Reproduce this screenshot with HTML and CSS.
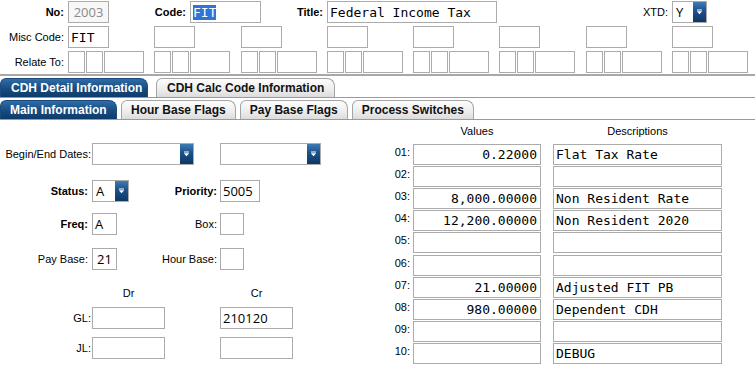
FILE: index.html
```html
<!DOCTYPE html>
<html lang="en">
<head>
<meta charset="utf-8">
<title>CDH Detail</title>
<link rel="stylesheet" href="styles.css">
</head>
<body>
<div class="hdr">
  <div class="r1">
    <span class="lb b w-no">No:</span>
    <div class="fld dis w41">2003</div>
    <span class="lb b w-code">Code:</span>
    <div class="fld mono w71"><span class="hl">FIT</span></div>
    <span class="lb b w-title">Title:</span>
    <div class="fld mono w170">Federal Income Tax</div>
    <span class="lb w-xtd">XTD:</span>
    <div class="dd w35"><span class="ddv">Y</span><span class="ddb"><svg width="7" height="6" viewBox="0 0 7 6"><path d="M1 0.5h5v1H1z M0.8 2.3h5.4L3.5 5.3z" fill="#fff"/></svg></span></div>
  </div>
  <div class="rg">
    <span class="lb">Misc Code:</span>
    <div class="fld mono w41">FIT</div>
    <div class="fld w41"></div>
    <div class="fld w41"></div>
    <div class="fld w41"></div>
    <div class="fld w41"></div>
    <div class="fld w41"></div>
    <div class="fld w41"></div>
    <div class="fld w41"></div>
  </div>
  <div class="rg">
    <span class="lb">Relate To:</span>
    <div class="grp"><div class="fld w17"></div><div class="fld w17"></div><div class="fld w40"></div></div>
    <div class="grp"><div class="fld w17"></div><div class="fld w17"></div><div class="fld w40"></div></div>
    <div class="grp"><div class="fld w17"></div><div class="fld w17"></div><div class="fld w40"></div></div>
    <div class="grp"><div class="fld w17"></div><div class="fld w17"></div><div class="fld w40"></div></div>
    <div class="grp"><div class="fld w17"></div><div class="fld w17"></div><div class="fld w40"></div></div>
    <div class="grp"><div class="fld w17"></div><div class="fld w17"></div><div class="fld w40"></div></div>
    <div class="grp"><div class="fld w17"></div><div class="fld w17"></div><div class="fld w40"></div></div>
    <div class="grp"><div class="fld w17"></div><div class="fld w17"></div><div class="fld w40"></div></div>
  </div>
</div>
<div class="hline"></div>
<div class="tabs t1">
  <div class="tab on">CDH Detail Information</div>
  <div class="tab gap8">CDH Calc Code Information</div>
</div>
<div class="tabs t2">
  <div class="tab on">Main Information</div>
  <div class="tab">Hour Base Flags</div>
  <div class="tab">Pay Base Flags</div>
  <div class="tab">Process Switches</div>
</div>
<div class="main">
  <div class="left">
    <div class="frow m0">
      <span class="lb tight">Begin/End Dates:</span>
      <div class="c2"><div class="dd w102"><span class="ddv"></span><span class="ddb"><svg width="7" height="6" viewBox="0 0 7 6"><path d="M1 0.5h5v1H1z M0.8 2.3h5.4L3.5 5.3z" fill="#fff"/></svg></span></div></div>
      <div class="dd w101"><span class="ddv"></span><span class="ddb"><svg width="7" height="6" viewBox="0 0 7 6"><path d="M1 0.5h5v1H1z M0.8 2.3h5.4L3.5 5.3z" fill="#fff"/></svg></span></div>
    </div>
    <div class="frow m15">
      <span class="lb b">Status:</span>
      <div class="c2"><div class="dd w37"><span class="ddv">A</span><span class="ddb"><svg width="7" height="6" viewBox="0 0 7 6"><path d="M1 0.5h5v1H1z M0.8 2.3h5.4L3.5 5.3z" fill="#fff"/></svg></span></div><span class="lb2 b">Priority:</span></div>
      <div class="fld w40">5005</div>
    </div>
    <div class="frow m11">
      <span class="lb b">Freq:</span>
      <div class="c2"><div class="fld w25">A</div><span class="lb2">Box:</span></div>
      <div class="fld w24"></div>
    </div>
    <div class="frow m13">
      <span class="lb">Pay Base:</span>
      <div class="c2"><div class="fld w25 ctr">21</div><span class="lb2">Hour Base:</span></div>
      <div class="fld w24"></div>
    </div>
    <div class="frow hrow m16">
      <span></span>
      <div class="c2"><span class="colh">Dr</span></div>
      <span class="colh">Cr</span>
    </div>
    <div class="frow m7">
      <span class="lb tight">GL:</span>
      <div class="c2"><div class="fld w73"></div></div>
      <div class="fld w73">210120</div>
    </div>
    <div class="frow m8">
      <span class="lb tight">JL:</span>
      <div class="c2"><div class="fld w73"></div></div>
      <div class="fld w73"></div>
    </div>
  </div>
  <div class="right">
    <div class="vgrid">
      <span></span><span class="vh">Values</span><span></span><span class="vh">Descriptions</span>
      <span class="rl">01:</span><div class="fld mono num">0.22000</div><span></span><div class="fld mono">Flat Tax Rate</div>
      <span class="rl">02:</span><div class="fld mono num"></div><span></span><div class="fld mono"></div>
      <span class="rl">03:</span><div class="fld mono num">8,000.00000</div><span></span><div class="fld mono">Non Resident Rate</div>
      <span class="rl">04:</span><div class="fld mono num">12,200.00000</div><span></span><div class="fld mono">Non Resident 2020</div>
      <span class="rl">05:</span><div class="fld mono num"></div><span></span><div class="fld mono"></div>
      <span class="rl">06:</span><div class="fld mono num"></div><span></span><div class="fld mono"></div>
      <span class="rl">07:</span><div class="fld mono num">21.00000</div><span></span><div class="fld mono">Adjusted FIT PB</div>
      <span class="rl">08:</span><div class="fld mono num">980.00000</div><span></span><div class="fld mono">Dependent CDH</div>
      <span class="rl">09:</span><div class="fld mono num"></div><span></span><div class="fld mono"></div>
      <span class="rl">10:</span><div class="fld mono num"></div><span></span><div class="fld mono">DEBUG</div>
    </div>
  </div>
</div>
</body>
</html>
```

FILE: styles.css
```css
html, body {
  margin: 0;
  padding: 0;
  background: #fff;
}
body {
  font-family: "Liberation Sans", Arial, sans-serif;
  font-size: 11px;
  color: #000;
  width: 755px;
  height: 369px;
  overflow: hidden;
}
.b { font-weight: bold; }
.lb {
  box-sizing: border-box;
  text-align: right;
  padding-right: 4px;
  white-space: nowrap;
}
.lb.tight { padding-right: 1px; }

.fld {
  box-sizing: border-box;
  height: 22px;
  border: 1px solid #ababab;
  background: #fff;
  display: flex;
  align-items: center;
  padding: 0 2px;
  overflow: hidden;
  white-space: nowrap;
  font-family: "Open Sans", "DejaVu Sans", sans-serif;
  font-size: 13px;
}
.fld.mono {
  font-family: "DejaVu Sans Mono", "Liberation Mono", monospace;
  font-size: 13px;
}
.fld.dis {
  color: #8a8a8a;
  background: #f7f7f7;
  justify-content: center;
}
.fld.num { justify-content: flex-end; padding-right: 3px; }
.fld.ctr { justify-content: center; }
.hl {
  background: #2f74d6;
  color: #fff;
  line-height: 15px;
}

.w17 { width: 17px; }
.w24 { width: 24px; }
.w25 { width: 25px; }
.w35 { width: 35px; }
.w37 { width: 37px; }
.w40 { width: 40px; }
.w41 { width: 41px; }
.w71 { width: 71px; }
.w73 { width: 73px; }
.w101 { width: 101px; }
.w102 { width: 102px; }
.w170 { width: 170px; }

.dd {
  box-sizing: border-box;
  height: 22px;
  border: 1px solid #ababab;
  background: #fff;
  display: flex;
  font-family: "Open Sans", "DejaVu Sans", sans-serif;
  font-size: 13px;
}
.ddv {
  flex: 1;
  display: flex;
  align-items: center;
  padding-left: 3px;
}
.ddb {
  width: 13px;
  background: linear-gradient(#3f7bb3, #1b5189 45%, #0d3766);
  display: flex;
  align-items: center;
  justify-content: center;
}
.ddb svg { display: block; }

/* header */
.hdr { padding-top: 1px; }
.r1 {
  display: flex;
  align-items: center;
  height: 22px;
}
.w-no { width: 68px; }
.w-code { width: 81px; }
.w-title { width: 66px; }
.w-xtd { width: 175px; }
.rg {
  display: grid;
  grid-template-columns: 68px repeat(8, 86.3px);
  align-items: center;
  height: 22px;
  margin-top: 3px;
}
.grp {
  display: flex;
  gap: 1px;
}
.hline {
  margin-top: 1px;
  height: 2px;
  background: #a8a8a8;
}

/* tabs */
.tabs {
  display: flex;
  align-items: flex-end;
  border-bottom: 1px solid #9a9a9a;
  margin-top: 2px;
  gap: 4px;
  height: 19px;
}
.tab {
  box-sizing: border-box;
  height: 19px;
  padding: 0 9px;
  display: flex;
  align-items: center;
  font-weight: bold;
  font-size: 12px;
  color: #111;
  white-space: nowrap;
  border: 1px solid #a5a5a5;
  border-bottom: none;
  border-radius: 6px 8px 0 0;
  background: linear-gradient(#fdfdfd, #ececec 60%, #dcdcdc);
}
.tab.on {
  color: #fff;
  border-color: #1a4c7f;
  background: linear-gradient(#2f6ca6, #174b80 55%, #0e3b6a);
}
.t1 .tab.on { width: 148px; padding-left: 10px; }
.t1 .gap8 { margin-left: 4px; padding: 0 10px; }
.t2 .tab.on { width: 117px; }

/* main */
.main {
  display: flex;
}
.left {
  width: 380px;
  padding-top: 23px;
}
.frow {
  display: grid;
  grid-template-columns: 92px 128px 110px;
  align-items: center;
  height: 22px;
}
.c2 {
  display: flex;
  align-items: center;
}
.lb2 {
  margin-left: auto;
  padding-right: 3px;
  white-space: nowrap;
}
.hrow { height: 14px; }
.colh {
  display: block;
  width: 73px;
  text-align: center;
}
.m0 { margin-top: 0; }
.m7 { margin-top: 7px; }
.m8 { margin-top: 8px; }
.m11 { margin-top: 11px; }
.m13 { margin-top: 13px; }
.m15 { margin-top: 15px; }
.m16 { margin-top: 16px; }

.right {
  flex: 1;
}
.vgrid {
  display: grid;
  grid-template-columns: 33px 128px 12px 169px;
  grid-template-rows: 23px;
  grid-auto-rows: 21px;
  row-gap: 1.1px;
}
.vgrid .fld { height: 21px; }
.vh {
  text-align: center;
  align-self: center;
  padding-bottom: 2px;
}
.rl {
  text-align: right;
  padding-right: 3px;
  padding-top: 2px;
}
```
